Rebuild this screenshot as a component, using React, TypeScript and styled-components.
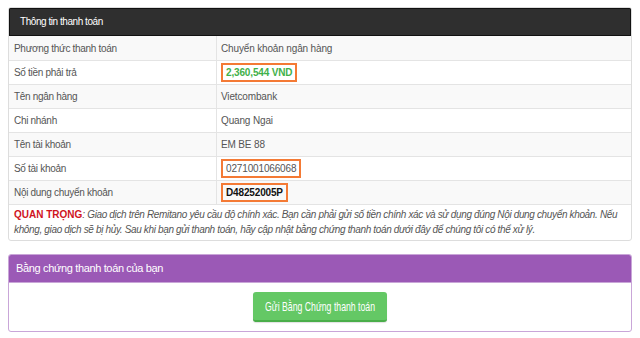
import styled, { createGlobalStyle } from "styled-components";

const GlobalStyle = createGlobalStyle`
  body {
    margin: 0;
    padding: 7px 8px 0;
    background: #fff;
    font-family: "Liberation Sans", Arial, sans-serif;
  }
`;

const Panel = styled.div`
  border: 1px solid #ddd;
  border-radius: 3px;
  background: #fff;
  overflow: hidden;
`;

const DarkHeader = styled.div`
  height: 26px;
  line-height: 26px;
  padding: 0 10px;
  background: #2f2f2f;
  border: 1px solid #111;
  color: #fff;
  font-size: 10px;
  letter-spacing: -0.45px;
`;

const Row = styled.div<{ $striped?: boolean }>`
  display: grid;
  grid-template-columns: 208px 1fr;
  height: 24px;
  border-top: 1px solid #e4e4e4;
  background: ${(p) => (p.$striped ? "#f9f9f9" : "#fff")};
  box-sizing: border-box;
  &:first-of-type {
    border-top: none;
  }
`;

const Label = styled.div`
  display: flex;
  align-items: center;
  padding: 0 5px;
  font-size: 10px;
  letter-spacing: -0.3px;
  color: #555;
  border-right: 1px solid #e4e4e4;
`;

const Value = styled.div`
  display: flex;
  align-items: center;
  padding: 0 5px 0 4px;
  font-size: 10px;
  letter-spacing: -0.15px;
  color: #555;
`;

const Highlight = styled.span<{ $tone?: "green" | "bold" }>`
  display: inline-block;
  padding: 1px 3px;
  border: 2px solid #f47a35;
  line-height: 13px;
  font-weight: ${(p) => (p.$tone ? "bold" : "normal")};
  color: ${(p) =>
    p.$tone === "green" ? "#3fb14a" : p.$tone === "bold" ? "#111" : "#555"};
`;

const Note = styled.div`
  border-top: 1px solid #e4e4e4;
  padding: 2px 5px 3px;
  font-size: 10px;
  letter-spacing: -0.35px;
  line-height: 15px;
  color: #555;
  font-style: italic;
`;

const Important = styled.span`
  color: #d0141d;
  font-weight: bold;
  font-style: normal;
  letter-spacing: 0;
`;

const ProofPanel = styled.div`
  margin-top: 13px;
  border: 1px solid #c9a6d8;
  border-radius: 3px;
  overflow: hidden;
`;

const PurpleHeader = styled.div`
  height: 27px;
  line-height: 27px;
  padding: 0 7px;
  background: #9b59b6;
  color: #fff;
  font-size: 11px;
  letter-spacing: -0.35px;
  border-bottom: 1px solid #c9a6d8;
`;

const ProofBody = styled.div`
  display: flex;
  justify-content: center;
  padding: 9px 0 9px;
`;

const SendButton = styled.button`
  display: flex;
  align-items: center;
  justify-content: center;
  width: 134px;
  height: 30px;
  border: none;
  border-bottom: 2px solid #4aae4a;
  border-radius: 3px;
  background: #64c865;
  color: #fff;
  cursor: pointer;
  padding: 0;
  overflow: visible;
  box-shadow: 0 1px 1px rgba(0, 0, 0, 0.12);
`;

const ButtonText = styled.span`
  flex: none;
  display: inline-block;
  font-family: "Liberation Sans", Arial, sans-serif;
  font-size: 13px;
  transform: scaleX(0.67);
  transform-origin: center;
  white-space: nowrap;
`;

const rows: { label: string; value: React.ReactNode }[] = [
  { label: "Phương thức thanh toán", value: "Chuyển khoản ngân hàng" },
  { label: "Số tiền phải trả", value: <Highlight $tone="green">2,360,544 VND</Highlight> },
  { label: "Tên ngân hàng", value: "Vietcombank" },
  { label: "Chi nhánh", value: "Quang Ngai" },
  { label: "Tên tài khoản", value: "EM BE 88" },
  { label: "Số tài khoản", value: <Highlight>0271001066068</Highlight> },
  { label: "Nội dung chuyển khoản", value: <Highlight $tone="bold">D48252005P</Highlight> },
];

export default function App() {
  return (
    <>
      <GlobalStyle />
      <Panel>
        <DarkHeader>Thông tin thanh toán</DarkHeader>
        <div>
          {rows.map((row, i) => (
            <Row key={i} $striped={i % 2 === 0}>
              <Label>{row.label}</Label>
              <Value>{row.value}</Value>
            </Row>
          ))}
        </div>
        <Note>
          <Important>QUAN TRỌNG</Important>: Giao dịch trên Remitano yêu cầu độ chính xác. Bạn cần phải gửi số tiền chính xác và sử dụng đúng Nội dung chuyển khoản. Nếu không, giao dịch sẽ bị hủy. Sau khi bạn gửi thanh toán, hãy cập nhật bằng chứng thanh toán dưới đây để chúng tôi có thể xử lý.
        </Note>
      </Panel>
      <ProofPanel>
        <PurpleHeader>Bằng chứng thanh toán của bạn</PurpleHeader>
        <ProofBody>
          <SendButton>
            <ButtonText>Gửi Bằng Chứng thanh toán</ButtonText>
          </SendButton>
        </ProofBody>
      </ProofPanel>
    </>
  );
}
